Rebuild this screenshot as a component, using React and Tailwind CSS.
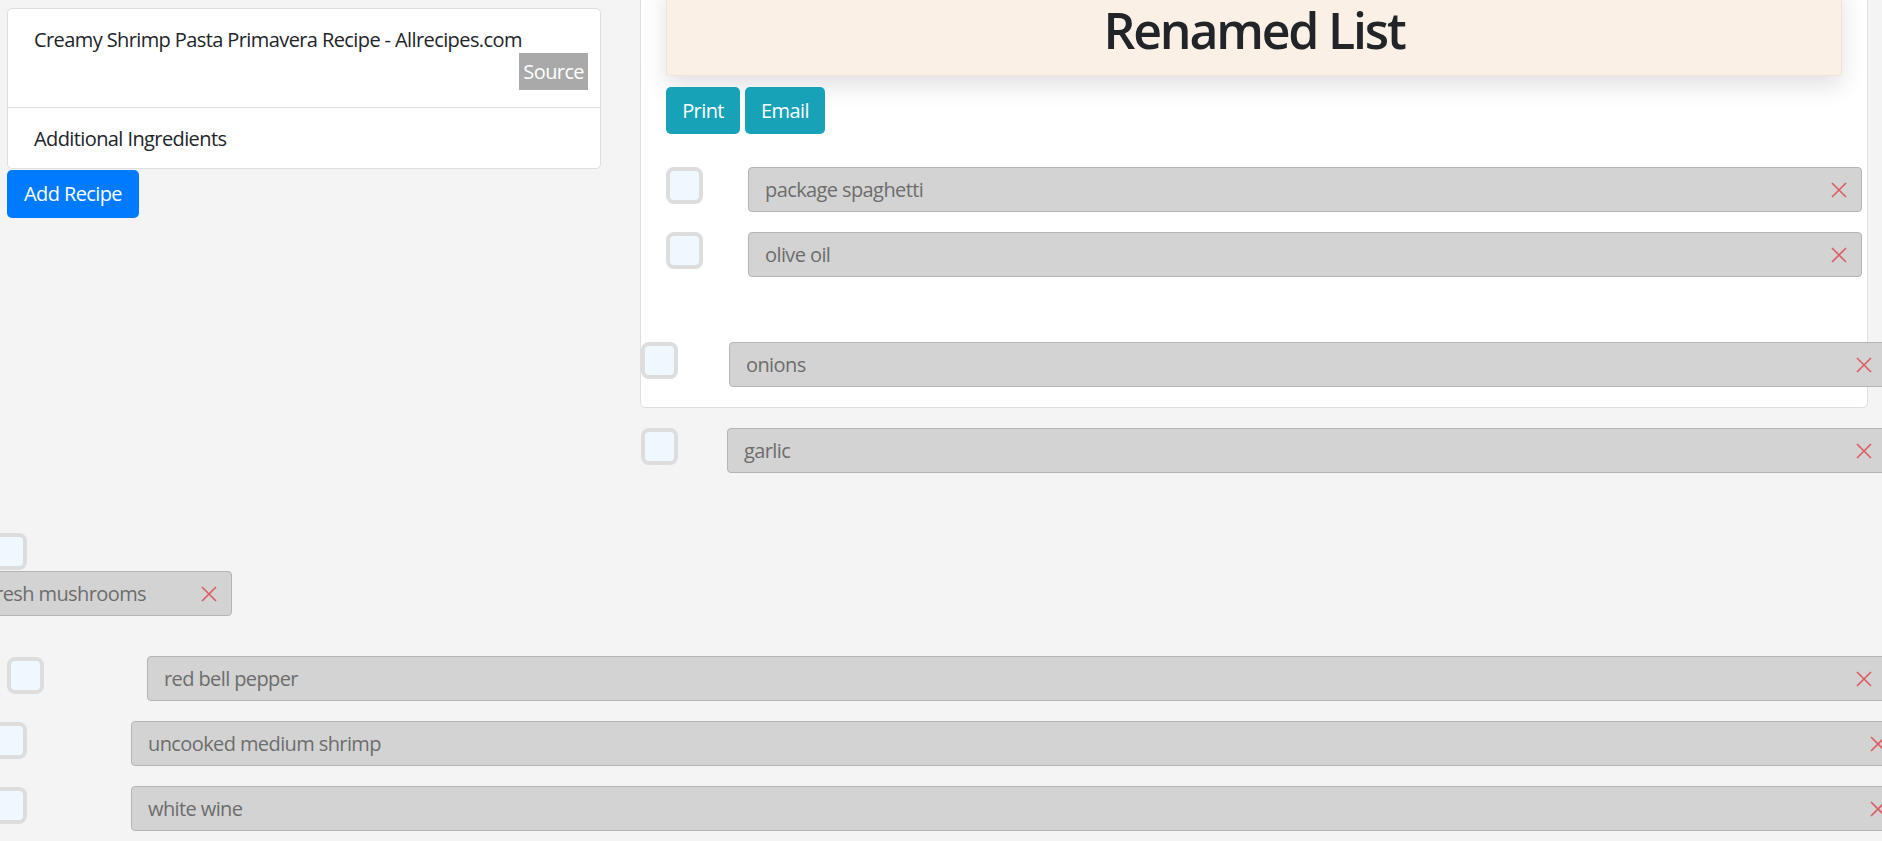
import React from 'react';

const XMark = () => (
  <svg width="16" height="16" viewBox="0 0 16 16" className="shrink-0">
    <path d="M1 1L15 15M15 1L1 15" stroke="#db5c62" strokeWidth="1.6" fill="none" />
  </svg>
);

const Box = ({ className = '' }) => (
  <div className={`w-[37px] h-[37px] shrink-0 rounded-[8px] border-4 border-[#dddddd] bg-[#f0f8ff] ${className}`} />
);

const Field = ({ label, className = '' }) => (
  <div
    className={`h-[45px] shrink-0 flex items-center justify-between pl-[16px] pr-[14px] bg-[#d3d3d3] border border-[#b4b4b4] rounded-[4px] text-[#6d6d6d] ${className}`}
  >
    <span className="whitespace-nowrap">{label}</span>
    <XMark />
  </div>
);

export default function App() {
  return (
    <div className="w-[1882px] h-[841px] overflow-hidden bg-[#f4f4f4] text-[20px] leading-[30px] tracking-[-0.6px] text-[#212529] font-['Open_Sans','Noto_Sans',sans-serif]">
      <div className="flex items-start">
        {/* recipes column */}
        <div className="ml-[7px] mt-[8px] w-[594px] shrink-0">
          <div className="bg-white border border-[#dfdfdf] rounded-[5px]">
            <div className="px-[26px] pt-[16px] pb-[17px] border-b border-[#dfdfdf]">
              <div>Creamy Shrimp Pasta Primavera Recipe - Allrecipes.com</div>
              <div className="flex justify-end -mr-[14px] -mt-[2px]">
                <span className="h-[37px] leading-[37px] px-[4px] bg-[#a9a9a9] text-white">Source</span>
              </div>
            </div>
            <div className="px-[26px] pt-[16px] pb-[14px]">Additional Ingredients</div>
          </div>
          <button className="mt-px h-[48px] w-[132px] rounded-[5px] bg-[#007bff] text-white">Add Recipe</button>
        </div>

        {/* list column */}
        <div className="ml-[39px] w-[1228px] shrink-0">
          <div className="-mt-[44px] pt-[24px] px-[25px] pb-[20px] bg-white border border-[#dfdfdf] rounded-[5px]">
            <div className="h-[95px] flex items-center justify-center bg-[#faf0e6] border border-[#efe4d7] rounded-[4px] shadow-[0_10px_24px_rgba(0,0,0,0.12)]">
              <h1 className="mt-[2px] text-[50px] leading-[50px] font-semibold tracking-[-2.2px]">Renamed List</h1>
            </div>
            <div className="mt-[11px] flex gap-[5px]">
              <button className="h-[47px] w-[74px] rounded-[5px] bg-[#17a2b8] text-white">Print</button>
              <button className="h-[47px] w-[80px] rounded-[5px] bg-[#17a2b8] text-white">Email</button>
            </div>

            <div className="mt-[33px] flex items-start -mr-[20px]">
              <Box />
              <Field label="package spaghetti" className="ml-[45px] flex-1" />
            </div>
            <div className="mt-[20px] flex items-start -mr-[20px]">
              <Box />
              <Field label="olive oil" className="ml-[45px] flex-1" />
            </div>

            <div className="mt-[65px] flex items-start -ml-[25px] -mr-[45px]">
              <Box className="w-[36px] h-[36px]" />
              <Field label="onions" className="ml-[51px] flex-1" />
            </div>
          </div>

          <div className="mt-[20px] flex items-start ml-px -mr-[19px]">
            <Box className="w-[36px] h-[37px]" />
            <Field label="garlic" className="ml-[49px] flex-1" />
          </div>
        </div>
      </div>

      {/* dragged items */}
      <div className="mt-[60px]">
        <Box className="-ml-[10px]" />
        <Field label="fresh mushrooms" className="-ml-[28px] w-[260px] mt-px" />
      </div>

      <div className="mt-[40px] flex items-start">
        <Box className="ml-[7px] mt-px w-[36px] h-[36px]" />
        <Field label="red bell pepper" className="ml-[103px] w-[1740px]" />
      </div>
      <div className="mt-[20px] flex items-start">
        <Box className="-ml-[10px] mt-px w-[37px] h-[35px]" />
        <Field label="uncooked medium shrimp" className="ml-[104px] w-[1770px]" />
      </div>
      <div className="mt-[20px] flex items-start">
        <Box className="-ml-[10px] mt-px w-[37px] h-[35px]" />
        <Field label="white wine" className="ml-[104px] w-[1770px]" />
      </div>
    </div>
  );
}
